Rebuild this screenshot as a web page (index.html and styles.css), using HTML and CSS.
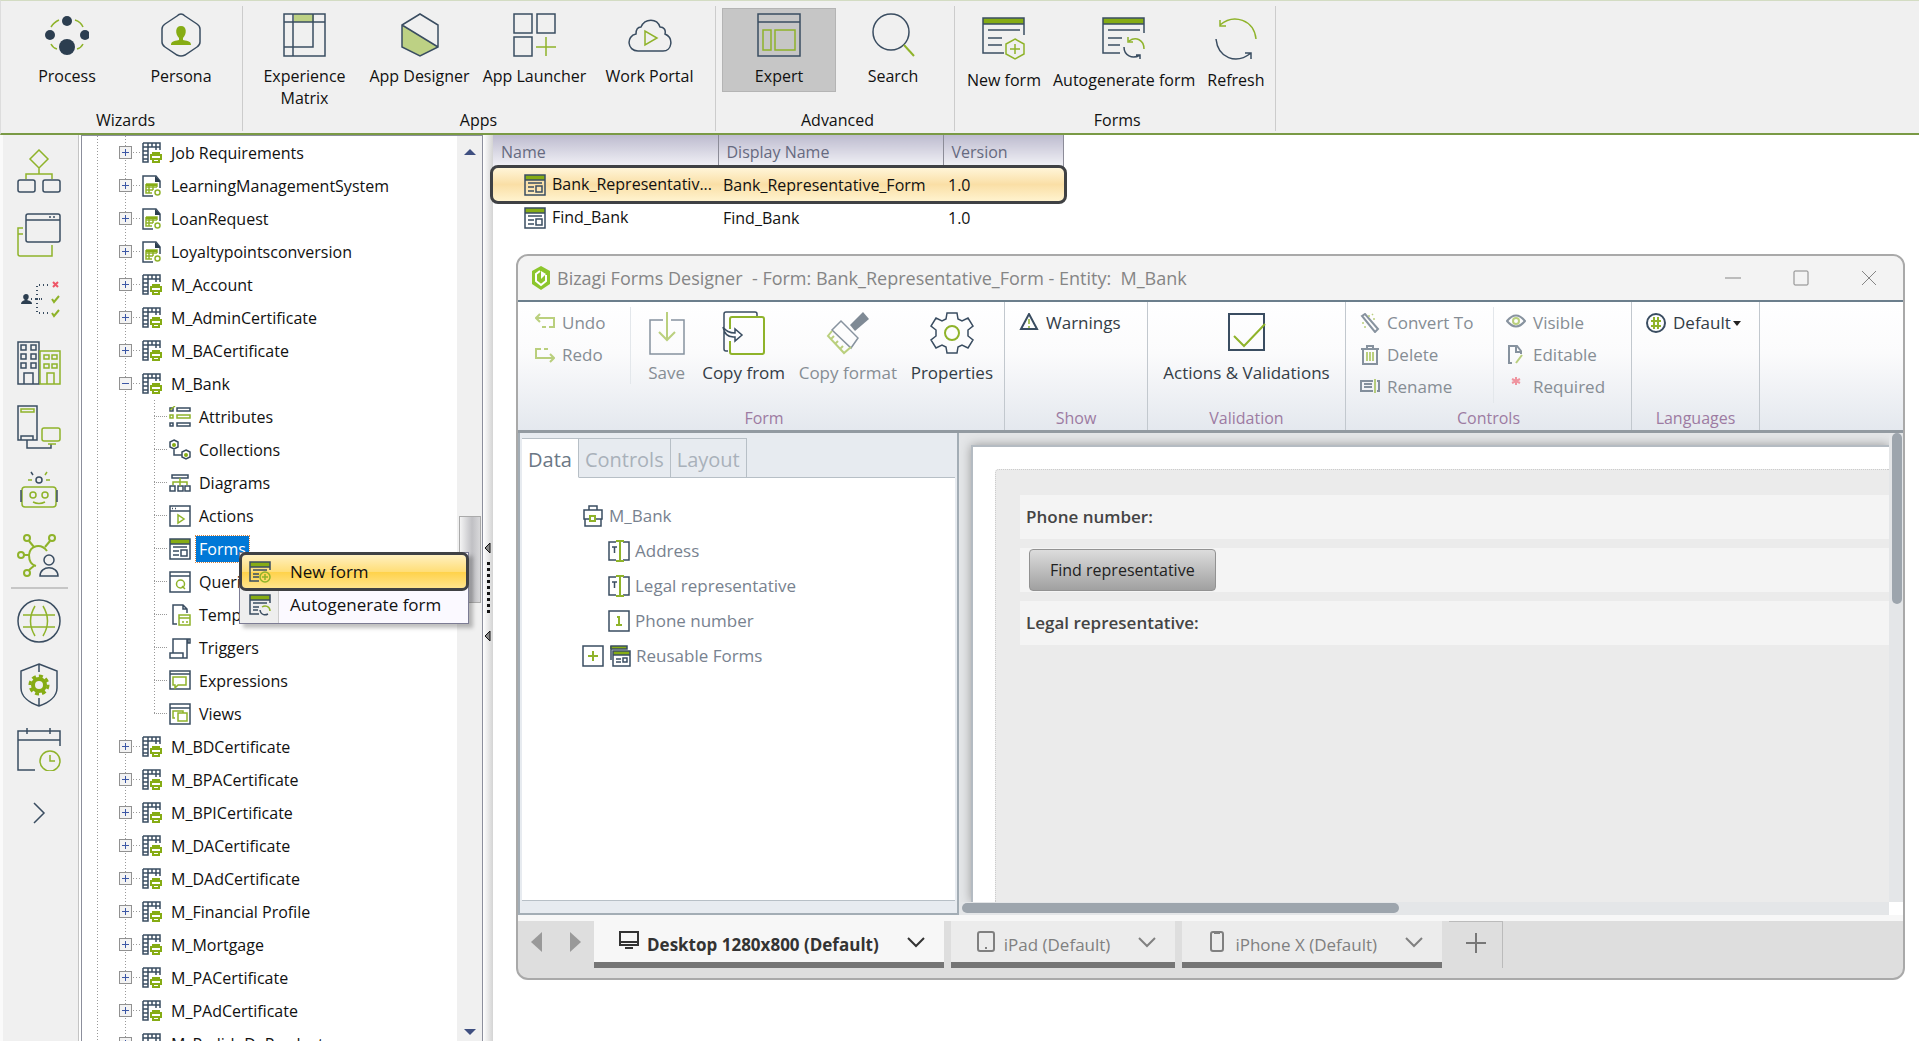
FILE: index.html
```html
<!DOCTYPE html>
<html lang="en">
  <head>
    <meta charset="utf-8">
    <title>Bizagi Studio</title>
    <link rel="stylesheet" href="styles.css">
  </head>
  <body>
    <!-- Icon sprite -->
    <svg class="sprite" aria-hidden="true">
      <symbol id="i-entity" viewBox="0 0 20 22">
        <path class="n" d="M1 1h17v7M1 1v19h5V1M1 5h17M1 9h5M1 13h5M1 17h5M10 1v4M14 1v7"/>
        <path class="g2 solid" d="M9 13h10v4H9zM11 13v-2h6v2M11 17v3h6v-3"/>
      </symbol>
      <symbol id="i-appentity" viewBox="0 0 20 22">
        <path class="n" d="M11 21H1V1h13l4 5v7"/>
        <path class="nf" d="M13 1l5 5v1h-5z"/>
        <path class="g" d="M4 9h11v3M4 9v9h6M4 12h11M4 15h7M7 9v9M11 9v6"/>
        <path class="gf" d="M4 9h11v2H4z"/>
        <circle class="g" cx="15.500" cy="17.500" r="2.500"/>
      </symbol>
      <symbol id="i-attributes" viewBox="0 0 22 22">
        <path class="n" d="M8 2h13v3H8zM8 17h13v3H8zM1 17h3v3H1zM1 2h3v3H1z"/>
        <path class="g" d="M8 9h13v3H8zM1 9h3v3H1zM1 4l5-4"/>
      </symbol>
      <symbol id="i-collections" viewBox="0 0 22 22">
        <path class="n" d="M5 1l4 2v5l-4 2-4-2V3zM17 11l4 2v5l-4 2-4-2v-5zM5 10v6h8"/>
        <circle class="gf" cx="5" cy="6" r="2"/><circle class="gf" cx="17" cy="16" r="2"/>
      </symbol>
      <symbol id="i-diagrams" viewBox="0 0 22 22">
        <path class="n" d="M3 3h16v3H3zM1 14h5v5H1zM9 14h5v5H9zM16 14h5v5h-5z"/>
        <path class="g" d="M11 6v8M4 13v-3h14v3"/>
      </symbol>
      <symbol id="i-actions" viewBox="0 0 22 22">
        <path class="n" d="M1 1h20v20H1zM1 6h20M3 3.500h1M6 3.500h1"/>
        <path class="g" d="M9 10v8l6-4z"/>
      </symbol>
      <symbol id="i-forms" viewBox="0 0 22 22">
        <path class="gf" d="M1 1h20v5H1z"/>
        <path class="n" d="M1 1h20v20H1zM1 6h20M4 9h14M4 13h6M4 17h6M12 12h6v6h-6z"/>
      </symbol>
      <symbol id="i-queries" viewBox="0 0 22 22">
        <path class="n" d="M1 1h20v20H1zM1 5h20"/>
        <path class="g" d="M13 15l3 3"/><circle class="g" cx="11.500" cy="13" r="4"/>
      </symbol>
      <symbol id="i-templates" viewBox="0 0 22 22">
        <path class="n" d="M8 20H4V1h10l4 4v4M14 1v4h4"/>
        <path class="g" d="M10 11h11v10H10zM10 14h11M13 18h2M17 18h2"/>
      </symbol>
      <symbol id="i-triggers" viewBox="0 0 22 22">
        <path class="n" d="M4 16V2h15v4h2V2h-3v18M1 16h13v5H1zM14 21h4V3"/>
      </symbol>
      <symbol id="i-expressions" viewBox="0 0 22 22">
        <path class="n" d="M1 1h20v18H1zM1 4h20"/>
        <path class="g" d="M4 7h13v8H9l-3 3v-3H4z"/>
      </symbol>
      <symbol id="i-views" viewBox="0 0 22 22">
        <path class="n" d="M1 1h20v20H1zM1 5h20"/>
        <path class="g" d="M9 10h9v8H9zM6 15H4V8h10v2"/>
      </symbol>
      <symbol id="i-newform" viewBox="0 0 44 44">
        <path class="gf" d="M1 1h41v6H1z"/>
        <path class="n" d="M22 36H1V1h41v17M1 7h41M6 13h32M6 21h14M6 28h14"/>
        <path class="g" d="M33 22l9 5v10l-9 5-9-5V27zM33 27v10M28 32h10"/>
      </symbol>
      <symbol id="i-autoform" viewBox="0 0 44 44">
        <path class="gf" d="M1 1h41v6H1z"/>
        <path class="n" d="M18 36H1V1h41v15M1 7h41M6 13h32M6 21h14M6 28h12M22 30c0 8 8 13 16 8M38 42v-4h-4"/>
        <path class="g" d="M42 32c0-9-8-13-15-8M26 20v5h5"/>
      </symbol>
      <symbol id="i-newform-small" viewBox="0 0 22 22">
        <path class="gf" d="M1 1h20v5H1z"/>
        <path class="n" d="M10 20H1V1h20v8M1 6h20M4 9h14M4 13h6M4 16h6"/>
        <circle class="g" cx="16" cy="16" r="5"/>
        <path class="g" d="M16 13v6M13 16h6"/>
      </symbol>
      <symbol id="i-autoform-small" viewBox="0 0 22 22">
        <path class="gf" d="M1 1h20v5H1z"/>
        <path class="n" d="M10 20H1V1h20v8M1 6h20M4 9h14M4 13h6M4 16h5M11 16c1 6 6 5 8 4"/>
        <path class="g" d="M21 17c0-5-5-6-8-4"/>
      </symbol>
      <symbol id="i-chevron" viewBox="0 0 20 12"><path d="M2 2l8 8 8-8"/></symbol>
      <symbol id="i-text" viewBox="0 0 22 22">
        <path class="n" d="M8 2H1v18h7M15 2h6v18h-6M4 7h5M6.500 7v6"/>
        <path class="g2" d="M8 1h8M12 1v20M8 21h8"/>
      </symbol>
    </svg>

    <header class="ribbon">
      <section class="ribbon-group">
        <div class="ribbon-items">
          <button class="tool">
            <svg class="tool-icon" viewBox="0 0 44 44"><path class="g" d="M6 14q3-5 8-7M30 7q6 2 8 7M6 31q2 4 6 5M38 31q-2 4-6 5"/><g class="nf"><circle cx="22" cy="8" r="5"/><circle cx="5" cy="22" r="5"/><circle cx="40" cy="22" r="5"/><circle cx="22" cy="34" r="8"/></g></svg>
            Process
          </button>
          <button class="tool">
            <svg class="tool-icon" viewBox="0 0 44 44"><path class="n" d="M22 1q2 0 4 2l12 8q3 2 3 5v13q0 3-3 5l-12 8q-4 2-8 0L6 34q-3-2-3-5V16q0-3 3-5l12-8q2-2 4-2z"/><path class="gf" d="M22 13c6 0 6 8 2 12v2c6 1 8 2 8 5H12c0-3 2-4 8-5v-2c-4-4-4-12 2-12z"/></svg>
            Persona
          </button>
        </div>
        <h2>Wizards</h2>
      </section>
      <section class="ribbon-group apps">
        <div class="ribbon-items">
          <button class="tool">
            <svg class="tool-icon" viewBox="0 0 44 44"><path class="gl" d="M11 1h20v8H11z"/><path class="n" d="M1 1h41v42H1zM1 9h41M10 1v42M30 1v33H1"/></svg>
            Experience Matrix
          </button>
          <button class="tool">
            <svg class="tool-icon" viewBox="0 0 44 44"><path class="gl" d="M4 12l36 22-18 9-18-9z"/><path class="n" d="M22 1l18 11v22l-18 9-18-9V12zM4 12l36 22"/></svg>
            App Designer
          </button>
          <button class="tool">
            <svg class="tool-icon" viewBox="0 0 44 44"><path class="n" d="M1 1h18v19H1zM24 1h18v19H24zM1 24h18v19H1z"/><path class="g" d="M33 24v19M23 34h20"/></svg>
            App Launcher
          </button>
          <button class="tool">
            <svg class="tool-icon" viewBox="0 0 44 44"><path class="n" d="M10 38C-1 38-2 23 8 21c0-5 2-7 5-7 4-9 16-9 19 0 4 0 6 3 5 7 9 4 7 17-2 17z"/><path class="g" d="M17 18v14l12-7z"/></svg>
            Work Portal
          </button>
        </div>
        <h2>Apps</h2>
      </section>
      <section class="ribbon-group">
        <div class="ribbon-items">
          <button class="tool active">
            <svg class="tool-icon" viewBox="0 0 44 44"><path class="n" d="M1 1h42v42H1zM1 9h42"/><path class="g" d="M6 17h8v20H6zM18 17h20v20H18z"/></svg>
            Expert
          </button>
          <button class="tool">
            <svg class="tool-icon" viewBox="0 0 44 44"><circle class="n" cx="20" cy="19" r="18"/><path class="g2" d="M33 32l10 11"/></svg>
            Search
          </button>
        </div>
        <h2>Advanced</h2>
      </section>
      <section class="ribbon-group forms">
        <div class="ribbon-items">
          <button class="tool"><svg class="tool-icon"><use href="#i-newform"/></svg>New form</button>
          <button class="tool"><svg class="tool-icon"><use href="#i-autoform"/></svg>Autogenerate form</button>
          <button class="tool">
            <svg class="tool-icon" viewBox="0 0 44 44"><path class="g" d="M42 22C40 3 20-4 6 8M6 3v6h6"/><path class="n" d="M2 22c2 19 20 26 35 14M37 42v-6h-6"/></svg>
            Refresh
          </button>
        </div>
        <h2>Forms</h2>
      </section>
    </header>

    <div class="workspace">
      <nav class="rail">
        <button aria-label="Processes"><svg viewBox="0 0 44 44"><path class="g" d="M22 1l9 9-9 9-9-9zM22 19v6M9 30v-5h26v5"/><rect class="n" x="1" y="31" width="17" height="12" rx="2"/><rect class="n" x="26" y="31" width="17" height="12" rx="2"/></svg></button>
        <button aria-label="Windows"><svg viewBox="0 0 44 44"><rect class="n" x="9" y="1" width="34" height="28" rx="2"/><path class="n" d="M9 7h34M32 4h2M36 4h2"/><path class="g" d="M6 15H1v26q0 2 2 2h32V32M1 21h5"/></svg></button>
        <button aria-label="Rules"><svg viewBox="0 0 44 44"><path class="n dots" d="M14 22h12M20 22V8h12M20 22h6M20 22v14h12"/><path class="nf" d="M9 17c4 0 3 5 1 6 4 1 5 2 5 4H4c0-2 1-3 4-4-3-2-2-6 1-6z"/><path class="r" d="M36 5l5 5M41 5l-5 5"/><path class="g2" d="M35 22l2 3 5-6M35 36l2 3 5-6"/></svg></button>
        <button aria-label="Organization"><svg viewBox="0 0 44 44"><path class="n" d="M1 1h21v42H1zM4 4h5v5H4zM14 4h5v5h-5zM4 13h5v5H4zM14 13h5v5h-5zM4 22h5v5H4zM14 22h5v5h-5zM7 43V32h9v11"/><path class="g" d="M23 10h20v33H23zM27 14h5v4h-5zM35 14h5v4h-5zM27 23h5v4h-5zM35 23h5v4h-5zM30 43V32h7v11"/></svg></button>
        <button aria-label="Systems"><svg viewBox="0 0 44 44"><path class="n" d="M1 1h19v34H1zM4 35v-4h12v4M10 35v8h24v-4"/><path class="g" d="M4 4h13v3H4zM31 39h8"/><rect class="g" x="25" y="23" width="18" height="13" rx="2"/></svg></button>
        <button aria-label="Bots"><svg viewBox="0 0 44 44"><rect class="g" x="5" y="18" width="34" height="20" rx="3"/><circle class="g" cx="16" cy="26" r="3"/><circle class="g" cx="28" cy="26" r="3"/><path class="g" d="M16 33q6 3 12 0M11 11h4M28 6l2-3M29 11h4"/><path class="n" d="M4 21v12M40 21v12M16 6l-2-3"/><circle class="n" cx="22" cy="11" r="3"/></svg></button>
        <button aria-label="Experience"><svg viewBox="0 0 44 44"><g class="g2"><circle cx="10" cy="5" r="3"/><circle cx="35" cy="5" r="3"/><circle cx="4" cy="22" r="3"/><circle cx="10" cy="40" r="3"/><path d="M12 8l5 6M33 8l-5 6M7 22h5M12 37l6-5M30 18C24 10 13 12 12 22c0 6 3 10 7 11"/></g><circle class="n" cx="32" cy="27" r="5"/><path class="n" d="M23 43c0-11 18-11 18 0z"/></svg></button>
        <hr>
        <button aria-label="Localization"><svg viewBox="0 0 44 44"><circle class="n" cx="22" cy="22" r="21"/><path class="g" d="M6 16h32M6 28h32M18 7q-9 15 0 30M26 7q9 15 0 30"/></svg></button>
        <button aria-label="Security"><svg viewBox="0 0 44 44"><path class="n" d="M22 1l18 7v17c0 9-9 15-18 18C13 40 4 34 4 25V8zM22 1v8M22 35v8"/><circle class="gear" cx="22" cy="22" r="6"/><circle class="teeth" cx="22" cy="22" r="9"/></svg></button>
        <button aria-label="Schedule"><svg viewBox="0 0 44 44"><path class="n" d="M18 43H1V4h42v15M1 13h42M10 1v6M33 1v6"/><circle class="g" cx="33" cy="34" r="10"/><path class="g" d="M33 28v6h5"/></svg></button>
        <button aria-label="Expand"><svg viewBox="0 0 44 44"><path class="n" d="M17 12l10 10-10 10"/></svg></button>
      </nav>

      <aside class="explorer">
        <ul class="tree">
          <li><span class="node"><i class="box"></i><svg><use href="#i-entity"/></svg>Job Requirements</span></li>
          <li><span class="node"><i class="box"></i><svg><use href="#i-appentity"/></svg>LearningManagementSystem</span></li>
          <li><span class="node"><i class="box"></i><svg><use href="#i-appentity"/></svg>LoanRequest</span></li>
          <li><span class="node"><i class="box"></i><svg><use href="#i-appentity"/></svg>Loyaltypointsconversion</span></li>
          <li><span class="node"><i class="box"></i><svg><use href="#i-entity"/></svg>M_Account</span></li>
          <li><span class="node"><i class="box"></i><svg><use href="#i-entity"/></svg>M_AdminCertificate</span></li>
          <li><span class="node"><i class="box"></i><svg><use href="#i-entity"/></svg>M_BACertificate</span></li>
          <li>
            <span class="node"><i class="box open"></i><svg><use href="#i-entity"/></svg>M_Bank</span>
            <ul class="branch">
              <li><svg><use href="#i-attributes"/></svg>Attributes</li>
              <li><svg><use href="#i-collections"/></svg>Collections</li>
              <li><svg><use href="#i-diagrams"/></svg>Diagrams</li>
              <li><svg><use href="#i-actions"/></svg>Actions</li>
              <li class="has-menu">
                <svg><use href="#i-forms"/></svg><span class="selected">Forms</span>
                <div class="context-menu">
                  <button class="hot"><svg><use href="#i-newform-small"/></svg>New form</button>
                  <button><svg><use href="#i-autoform-small"/></svg>Autogenerate form</button>
                </div>
              </li>
              <li><svg><use href="#i-queries"/></svg>Queries</li>
              <li><svg><use href="#i-templates"/></svg>Templates</li>
              <li><svg><use href="#i-triggers"/></svg>Triggers</li>
              <li><svg><use href="#i-expressions"/></svg>Expressions</li>
              <li><svg><use href="#i-views"/></svg>Views</li>
            </ul>
          </li>
          <li><span class="node"><i class="box"></i><svg><use href="#i-entity"/></svg>M_BDCertificate</span></li>
          <li><span class="node"><i class="box"></i><svg><use href="#i-entity"/></svg>M_BPACertificate</span></li>
          <li><span class="node"><i class="box"></i><svg><use href="#i-entity"/></svg>M_BPICertificate</span></li>
          <li><span class="node"><i class="box"></i><svg><use href="#i-entity"/></svg>M_DACertificate</span></li>
          <li><span class="node"><i class="box"></i><svg><use href="#i-entity"/></svg>M_DAdCertificate</span></li>
          <li><span class="node"><i class="box"></i><svg><use href="#i-entity"/></svg>M_Financial Profile</span></li>
          <li><span class="node"><i class="box"></i><svg><use href="#i-entity"/></svg>M_Mortgage</span></li>
          <li><span class="node"><i class="box"></i><svg><use href="#i-entity"/></svg>M_PACertificate</span></li>
          <li><span class="node"><i class="box"></i><svg><use href="#i-entity"/></svg>M_PAdCertificate</span></li>
          <li><span class="node"><i class="box"></i><svg><use href="#i-entity"/></svg>M_PedidoDeProducto</span></li>
        </ul>
        <div class="scrollbar">
          <svg viewBox="0 0 12 8"><path d="M0 7l6-6 6 6z"/></svg>
          <div class="track"><div class="thumb"></div></div>
          <svg viewBox="0 0 12 8"><path d="M0 1l6 6 6-6z"/></svg>
        </div>
      </aside>
      <div class="splitter">
        <svg viewBox="0 0 8 12"><path d="M6 1v10L1 6z"/></svg>
        <span></span>
        <svg viewBox="0 0 8 12"><path d="M6 1v10L1 6z"/></svg>
      </div>

      <main class="content">
        <table class="list">
          <thead>
            <tr><th>Name</th><th>Display Name</th><th>Version</th></tr>
          </thead>
          <tbody>
            <tr class="current"><td><svg><use href="#i-forms"/></svg>Bank_Representativ...</td><td>Bank_Representative_Form</td><td>1.0</td></tr>
            <tr><td><svg><use href="#i-forms"/></svg>Find_Bank</td><td>Find_Bank</td><td>1.0</td></tr>
          </tbody>
        </table>

        <section class="window">
          <div class="titlebar">
            <svg class="logo" viewBox="0 0 20 24"><path d="M10 0l9 5v13l-9 6-9-6V5z" fill="#8cc62c"/><path d="M9 5L5 8v7l5 4 5-4V9" fill="none" stroke="#fff" stroke-width="2"/><path d="M10 5l5 3-5 5z" fill="#fff"/></svg>
            <h1>Bizagi Forms Designer &nbsp;- Form: Bank_Representative_Form - Entity: &nbsp;M_Bank</h1>
            <button aria-label="Minimize"><svg viewBox="0 0 16 16"><path d="M0 8h16"/></svg></button>
            <button aria-label="Maximize"><svg viewBox="0 0 16 16"><rect x="1" y="1" width="14" height="14" rx="1"/></svg></button>
            <button aria-label="Close"><svg viewBox="0 0 16 16"><path d="M1 1l14 14M15 1L1 15"/></svg></button>
          </div>

          <div class="designer-ribbon">
            <section class="form-group">
              <div class="row">
                <div class="stack undo">
                  <button class="small off"><svg viewBox="0 0 20 20"><path class="g2" d="M5 1L1 5l4 4M1 5h18v9h-5M11 14H7"/></svg>Undo</button>
                  <button class="small off"><svg viewBox="0 0 20 20"><path class="g2" d="M15 9l4 4-4 4M19 13H1V4h5M9 4h4"/></svg>Redo</button>
                </div>
                <button class="large off"><svg viewBox="0 0 44 44"><path class="n" d="M18 9H5v34h34V9H26"/><path class="g2" d="M22 1v28M14 21l8 8 8-8"/></svg>Save</button>
                <button class="large"><svg viewBox="0 0 44 44"><path class="n" d="M6 40H4q-2 0-2-2V3q0-2 2-2h29q2 0 2 2v2M1 16q4 6 12 6v-4l7 6-7 6v-4Q3 27 1 16z"/><path class="g2" d="M8 18V8q0-2 2-2h30q2 0 2 2v33q0 2-2 2H10q-2 0-2-2V30"/></svg>Copy from</button>
                <button class="large off"><svg viewBox="0 0 44 44"><path class="nf" d="M24 14L37 1l6 7-14 12z"/><path class="n" d="M15 10l17 17-7 10L6 19z"/><path class="g2" d="M6 20L2 25l16 17 7-6M5 28l3-3M9 33l3-3M14 38l3-3"/></svg>Copy format</button>
                <button class="large"><svg viewBox="0 0 44 44"><path class="n" d="M17 2h10l1 6 4 2 6-3 5 8-5 4v6l5 4-5 8-6-3-4 2-1 6H17l-1-6-4-2-6 3-5-8 5-4v-6l-5-4 5-8 6 3 4-2z"/><circle class="g2" cx="22" cy="22" r="7"/></svg>Properties</button>
              </div>
              <h3>Form</h3>
            </section>
            <section class="show-group">
              <div class="row">
                <button class="small"><svg viewBox="0 0 20 20"><path class="n2" d="M10 1l8 15H2z"/><path class="g" d="M10 6v5M10 13v2"/></svg>Warnings</button>
              </div>
              <h3>Show</h3>
            </section>
            <section class="validation-group">
              <div class="row">
                <button class="large"><svg viewBox="0 0 44 44"><path class="n2" d="M4 3h35v36H4z"/><path class="g2" d="M9 25l10 10 21-22"/></svg>Actions &amp; Validations</button>
              </div>
              <h3>Validation</h3>
            </section>
            <section class="controls-group">
              <div class="row">
                <div class="stack convert">
                  <button class="small off"><svg viewBox="0 0 20 20"><path class="n2" d="M2 3l3-2 13 15-3 3z"/><path class="g" d="M9 2v2M13 6h2M2 10h2M5 13v2M12 1l1 1"/></svg>Convert To</button>
                  <button class="small off"><svg viewBox="0 0 20 20"><path class="n2" d="M3 5v14h14V5M1 4h18M7 4V1h6v3"/><path class="g2" d="M7 7v9M10 7v9M13 7v9"/></svg>Delete</button>
                  <button class="small off"><svg viewBox="0 0 20 20"><path class="n2" d="M13 4H1v10h12M17 4h2v10h-2M4 7h8M4 10h8"/><path class="g2" d="M15 2v14"/></svg>Rename</button>
                </div>
                <div class="stack">
                  <button class="small off"><svg viewBox="0 0 20 20"><path class="n2" d="M1 8q9-11 18 0-9 11-18 0z"/><circle class="g2" cx="10" cy="8" r="3"/></svg>Visible</button>
                  <button class="small off"><svg viewBox="0 0 20 20"><path class="n2" d="M6 18H3V1h8l4 5v3M10 1v6h5"/><path class="g2" d="M10 18l6-8"/></svg>Editable</button>
                  <button class="small off"><svg viewBox="0 0 20 20"><path class="r" d="M10 0v8M6 2l8 4M14 2L6 6"/></svg>Required</button>
                </div>
              </div>
              <h3>Controls</h3>
            </section>
            <section class="lang-group">
              <div class="row">
                <button class="small"><svg viewBox="0 0 20 20"><circle class="n2" cx="10" cy="10" r="9"/><path class="g2" d="M5 8h10M5 13h10M8 4v12M12 4v12"/></svg>Default<b class="caret"></b></button>
              </div>
              <h3>Languages</h3>
            </section>
          </div>

          <div class="designer">
            <div class="palette">
              <div class="tabs">
                <button class="on">Data</button><button>Controls</button><button>Layout</button>
              </div>
              <ul class="fields">
                <li><svg viewBox="0 0 22 22"><path class="n" d="M2 5h18v9H2zM7 5V1h8v4M3 14v7h16v-7"/><path class="g2 white" d="M8 11h5v5H8z"/></svg>M_Bank</li>
                <li class="child"><svg><use href="#i-text"/></svg>Address</li>
                <li class="child"><svg><use href="#i-text"/></svg>Legal representative</li>
                <li class="child"><svg viewBox="0 0 22 22"><path class="n" d="M1 1h20v20H1z"/><path class="g2" d="M9 7h2v8M8 15h6"/></svg>Phone number</li>
                <li><svg viewBox="0 0 22 22"><path class="n" d="M1 1h20v20H1z"/><path class="g2" d="M11 6v10M6 11h10"/></svg><svg viewBox="0 0 22 22"><path class="gf" d="M1 1h17v3H1zM4 6h17v4H4z"/><path class="n" d="M2 15V1h16v3H2M4 6h17v15H4zM4 10h17M7 14h5M7 17h5M14 13h4v4h-4z"/></svg>Reusable Forms</li>
              </ul>
              <div class="palette-foot"></div>
            </div>
            <div class="canvas">
              <div class="page">
                <div class="form">
                  <div class="field">Phone number:</div>
                  <div class="field"><button class="find">Find representative</button></div>
                  <div class="field">Legal representative:</div>
                </div>
              </div>
              <div class="vbar"><div></div></div>
              <div class="hbar"><div></div></div>
              <div class="corner"></div>
            </div>
          </div>

          <div class="devices">
            <div class="arrows">
              <button aria-label="Previous"><svg viewBox="0 0 12 20"><path d="M11 0v20L0 10z"/></svg></button>
              <button aria-label="Next"><svg viewBox="0 0 12 20"><path d="M1 0v20l11-10z"/></svg></button>
            </div>
            <button class="device on"><svg viewBox="0 0 22 22"><path d="M2 1h18v13H2zM2 11h18M7 17h8"/></svg><span>Desktop 1280x800 (Default)</span><svg class="chev"><use href="#i-chevron"/></svg></button>
            <button class="device"><svg viewBox="0 0 22 22"><rect x="3" y="1" width="16" height="19" rx="2"/><path d="M10 17h2"/></svg><span>iPad (Default)</span><svg class="chev"><use href="#i-chevron"/></svg></button>
            <button class="device"><svg viewBox="0 0 22 22"><rect x="5" y="1" width="12" height="19" rx="2"/><path d="M8 2h6"/></svg><span>iPhone X (Default)</span><svg class="chev"><use href="#i-chevron"/></svg></button>
            <button class="add" aria-label="Add device"><svg viewBox="0 0 20 20"><path d="M10 0v20M0 10h20"/></svg></button>
          </div>
        </section>
      </main>
    </div>
  </body>
</html>
```
FILE: styles.css
```css
* {
  box-sizing: border-box;
}

body {
  margin: 0;
  height: 100vh;
  display: flex;
  flex-direction: column;
  overflow: hidden;
  background: #fff;
  color: #111;
  font-family: "Open Sans", "Segoe UI", sans-serif;
  font-size: 16px;
  line-height: 22px;
}

button {
  font: inherit;
  color: inherit;
  background: none;
  border: none;
  padding: 0;
  white-space: nowrap;
}

ul {
  list-style: none;
  margin: 0;
  padding: 0;
}

h1, h2, h3 {
  margin: 0;
  font-size: 16px;
  font-weight: normal;
}

/* Icon strokes */
svg {
  flex: none;
}

.sprite {
  position: absolute;
  width: 0;
  height: 0;
}

.n, .n2, .g, .g2, .r {
  fill: none;
  stroke: #3a4d61;
  stroke-width: 1.5;
}

.g, .g2 {
  stroke: #8fb32a;
}

.n2, .g2 {
  stroke-width: 2;
}

.solid {
  stroke: #86ac14;
}

.r {
  stroke: #ee5566;
  stroke-width: 2;
}

.nf {
  fill: #2c3e50;
}

.gf {
  fill: #86ac14;
}

.gl {
  fill: #bdd184;
}

.white {
  fill: #fff;
}

.dots {
  stroke-dasharray: 1 3;
  stroke-width: 2;
}

.gear {
  fill: none;
  stroke: #86ac14;
  stroke-width: 4;
}

.teeth {
  fill: none;
  stroke: #86ac14;
  stroke-width: 3;
  stroke-dasharray: 4 3;
}

/* Main ribbon */
.ribbon {
  display: flex;
  flex: none;
  height: 135px;
  padding: 5px 3px 2px;
  background: #f0f0f0;
  border-top: 1px solid #d3dcc3;
  border-bottom: 2px solid #7a9a45;
  border-left: 1px solid #ddd;
}

.ribbon-group {
  display: flex;
  flex-direction: column;
  justify-content: space-between;
  padding: 2px 4px 0 6px;
  border-right: 1px solid #ccc;
  text-align: center;
}

.ribbon-group h2 {
  padding-left: 3px;
}

.ribbon-items {
  display: flex;
}

.tool {
  display: flex;
  flex-direction: column;
  align-items: center;
  width: 114px;
  height: 84px;
  padding-top: 4px;
  gap: 8px;
  white-space: normal;
  border: 1px solid transparent;
}

.ribbon-group.apps {
  padding-left: 4px;
  padding-right: 8px;
}

.apps .tool {
  width: 115px;
}

.apps .tool:first-child {
  padding-left: 15px;
  padding-right: 15px;
}

.tool.active {
  background: #c6c6c6;
  border-color: #b4b4b4;
}

.tool-icon {
  width: 44px;
  height: 44px;
}

.forms .ribbon-items {
  padding-top: 4px;
}

.forms .tool {
  width: auto;
  padding-left: 5px;
  padding-right: 5px;
}

/* Left rail */
.workspace {
  display: flex;
  flex: 1;
  min-height: 0;
}

.rail {
  display: flex;
  flex-direction: column;
  align-items: center;
  gap: 20px;
  width: 79px;
  padding: 14px 3px 0 0;
  background: #f0f0f0;
  border-left: 3px solid #fafafa;
  border-right: 1px solid #c4c4c4;
}

.rail button,
.rail svg {
  display: block;
  width: 44px;
  height: 44px;
}

.rail hr {
  width: 57px;
  height: 2px;
  margin: -10px 0;
  border: none;
  background: #c6c6c6;
}

/* Entity tree */
.explorer {
  display: flex;
  width: 402px;
  margin-left: 2px;
  border: 1px solid #8c8f9c;
  border-bottom: none;
}

.tree {
  flex: 1;
  height: 100%;
  padding-left: 37px;
  background: repeating-linear-gradient(#999 0 1px, #fff 1px 3px) 15px 0 / 1px 100% no-repeat,
    repeating-linear-gradient(#999 0 1px, #fff 1px 3px) 43px 0 / 1px 100% no-repeat;
}

.node {
  display: flex;
  align-items: center;
  height: 33px;
  background: repeating-linear-gradient(90deg, #999 0 1px, transparent 1px 3px) 14px 16px / 8px 1px no-repeat;
}

.node svg {
  width: 20px;
  height: 22px;
  margin-right: 9px;
}

.box {
  width: 13px;
  height: 13px;
  margin-right: 10px;
  border: 1px solid #919191;
  background: linear-gradient(#3c57a5, #3c57a5) 2px 5px / 7px 1px no-repeat,
    linear-gradient(#3c57a5, #3c57a5) 5px 2px / 1px 7px no-repeat,
    #f3f3f3;
}

.box.open {
  background: linear-gradient(#3c57a5, #3c57a5) 2px 5px / 7px 1px no-repeat,
    #f3f3f3;
}

.branch {
  padding-left: 35px;
  background: repeating-linear-gradient(#999 0 1px, #fff 1px 3px) 35px 0 / 1px 314px no-repeat;
}

.branch > li {
  display: flex;
  align-items: center;
  height: 33px;
}

.branch > li::before {
  content: "";
  width: 13px;
  margin-right: 2px;
  border-top: 1px dotted #999;
}

.branch > li > svg {
  width: 22px;
  height: 22px;
  margin-right: 8px;
}

.branch .selected {
  margin: 0 -3px;
  padding: 2px 3px;
  background: #0078d7;
  color: #fff;
  outline: 1px dotted #d08040;
}

.has-menu {
  position: relative;
}

.context-menu {
  position: absolute;
  z-index: 2;
  left: 85px;
  top: 20px;
  width: 230px;
  padding: 2px;
  border: 1px solid #7c7c94;
  background: linear-gradient(90deg, #eee 38px, #ccc 38px, #ccc 39px, #fbf9ff 39px);
  box-shadow: 4px 4px 4px rgba(0, 0, 0, 0.25);
}

.context-menu button {
  display: flex;
  align-items: center;
  gap: 19px;
  width: 100%;
  height: 33px;
  padding-left: 7px;
  font-size: 17px;
}

.context-menu svg {
  width: 22px;
  height: 22px;
}

.context-menu .hot {
  background: linear-gradient(#fff0c0, #ffde78 50%, #ffd24a 52%, #ffe48c);
  outline: 3px solid #3f4144;
  border-radius: 4px;
}

.scrollbar {
  display: flex;
  flex-direction: column;
  align-items: center;
  width: 25px;
  padding: 12px 0 5px;
  background: #f0f0f0;
}

.scrollbar svg {
  width: 12px;
  height: 8px;
  fill: #3f4f80;
}

.track {
  flex: 1;
  width: 22px;
  padding-top: 360px;
}

.thumb {
  height: 87px;
  border: 1px solid #aaa;
  background: linear-gradient(90deg, #f4f4f4, #c0c0c4 60%, #d8d8da);
}

.splitter {
  display: flex;
  flex-direction: column;
  align-items: center;
  gap: 8px;
  width: 10px;
  padding-top: 407px;
  background: linear-gradient(90deg, #fff, #d4d4d4);
}

.splitter svg {
  width: 8px;
  height: 12px;
  fill: #888;
  stroke: #111;
}

.splitter span {
  width: 3px;
  height: 53px;
  margin-bottom: 7px;
  background: repeating-linear-gradient(#111 0 3px, transparent 3px 6px);
}

/* Form list */
.content {
  position: relative;
  flex: 1;
  min-width: 0;
}

.list {
  border-collapse: collapse;
  table-layout: fixed;
  width: 571px;
}

.list th {
  height: 33px;
  padding: 0 8px;
  text-align: left;
  font-weight: normal;
  color: #666a80;
  background: linear-gradient(#bdbbcf, #f4f4f8);
  border-right: 1px solid #8c8c98;
}

.list th:nth-child(1) {
  width: 225px;
}

.list th:nth-child(2) {
  width: 225px;
}

.list td {
  height: 33px;
  padding: 0 5px;
  white-space: nowrap;
}

.list td:first-child {
  padding-left: 31px;
}

.list svg {
  width: 22px;
  height: 22px;
  margin-right: 6px;
  vertical-align: middle;
}

.list .current {
  background: linear-gradient(#fff5d8, #fadfa6 50%, #fff3cf);
  outline: 3px solid #3f4144;
  border-radius: 5px;
}

/* Forms designer window */
.window {
  position: absolute;
  top: 119px;
  left: 23px;
  right: 14px;
  bottom: 61px;
  display: flex;
  flex-direction: column;
  overflow: hidden;
  border: 2px solid #a9a9a9;
  border-radius: 12px;
  background: #dedede;
}

.titlebar {
  display: flex;
  flex: none;
  align-items: center;
  gap: 52px;
  height: 44px;
  padding: 0 26px 0 13px;
  background: #f3f3f3;
  color: #858585;
}

.titlebar h1 {
  flex: 1;
  margin-left: -46px;
  font-size: 18px;
}

.titlebar .logo {
  width: 20px;
  height: 24px;
}

.titlebar button,
.titlebar button svg {
  display: block;
  width: 16px;
  height: 16px;
  fill: none;
  stroke: #858585;
}

.designer-ribbon {
  display: flex;
  flex: none;
  height: 133px;
  border-top: 2px solid #6c7f8c;
  border-bottom: 3px solid #929aa1;
  background: linear-gradient(#fff, #fbfbfc 40%, #e4e8ee);
  color: #333c46;
  font-size: 17px;
}

.designer-ribbon section {
  display: flex;
  flex-direction: column;
  justify-content: space-between;
  padding: 5px 14px 1px;
  border-right: 1px solid #c2c8ce;
}

.designer-ribbon h3 {
  text-align: center;
  color: #9d7ba2;
}

.designer-ribbon .row {
  display: flex;
}

.small {
  display: flex;
  align-items: center;
  gap: 7px;
  height: 32px;
}

.small svg {
  width: 20px;
  height: 20px;
}

.large {
  display: flex;
  flex-direction: column;
  align-items: center;
  gap: 7px;
  margin-top: 4px;
}

.large svg {
  width: 44px;
  height: 44px;
}

.off {
  color: #868d94;
}

.off svg {
  opacity: 0.6;
}

.designer-ribbon .form-group {
  width: 487px;
  padding-left: 17px;
  padding-right: 11px;
}

.form-group .row {
  justify-content: space-between;
}

.undo {
  width: 96px;
  border-right: 1px solid #e3e7eb;
}

.designer-ribbon .show-group {
  width: 143px;
}

.designer-ribbon .validation-group {
  width: 198px;
}

.validation-group .row {
  justify-content: center;
}

.designer-ribbon .controls-group {
  width: 286px;
}

.convert {
  width: 134px;
  margin-right: 12px;
  border-right: 1px solid #e3e7eb;
}

.designer-ribbon .lang-group {
  width: 128px;
}

.caret {
  margin-left: -5px;
  border: 4px solid transparent;
  border-top: 5px solid #222;
  border-bottom: none;
}

.designer {
  display: flex;
  flex: 1;
  min-height: 0;
}

.palette {
  display: flex;
  flex-direction: column;
  width: 441px;
  padding: 0 2px;
  border: 2px solid #a3adb5;
  border-top: none;
  background: #e7ebf0;
}

.tabs {
  display: flex;
  height: 45px;
  padding-top: 5px;
  border-bottom: 1px solid #b7bfc6;
}

.tabs button {
  height: 40px;
  padding: 3px 6px 0;
  border: 1px solid #b7bfc6;
  border-left: none;
  color: #a9b1ba;
  font-size: 20px;
}

.tabs .on {
  background: #fff;
  border-bottom-color: #fff;
  color: #6b7785;
}

.fields {
  flex: 1;
  padding: 20px 0 0 60px;
  background: #fff;
  border-bottom: 1px solid #b7bfc6;
  color: #78828f;
  font-size: 17px;
}

.fields li {
  display: flex;
  align-items: center;
  gap: 5px;
  height: 35px;
}

.fields .child {
  padding-left: 26px;
}

.fields svg {
  width: 22px;
  height: 22px;
}

.palette-foot {
  height: 12px;
}

.canvas {
  display: grid;
  flex: 1;
  grid-template-columns: 1fr 14px;
  grid-template-rows: 1fr 13px;
  min-width: 0;
  background: #e4e6e8;
}

.page {
  margin: 12px 0 0 12px;
  padding: 22px 0 0 22px;
  border: 2px solid #b4bbc2;
  border-right: none;
  border-bottom: none;
  background: #fff;
  box-shadow: 0 0 10px #999;
  clip-path: inset(-12px 0 0 -12px);
}

.form {
  height: 100%;
  padding: 25px 0 0 24px;
  border: 1px dotted #ccc;
  border-right: none;
  border-bottom: none;
  border-radius: 4px 0 0 0;
  background: #ebebeb;
}

.field {
  display: flex;
  align-items: center;
  height: 44px;
  margin-bottom: 9px;
  padding-left: 6px;
  background: #f4f4f4;
  color: #444;
  font-size: 17px;
  font-weight: 600;
}

.find {
  height: 42px;
  margin-left: 3px;
  padding: 0 20px;
  border: 1px solid #929292;
  border-radius: 4px;
  background: linear-gradient(#dcdcdc, #a0a0a0);
  color: #222;
  font-size: 16px;
  font-weight: normal;
}

.vbar div {
  width: 10px;
  height: 171px;
  margin-left: 3px;
  border-radius: 5px;
  background: #9da5ad;
}

.hbar div {
  width: 47%;
  height: 10px;
  margin: 1px 0 0 3px;
  border-radius: 5px;
  background: #9da5ad;
}

.corner {
  background: #fff;
}

/* Device tabs */
.devices {
  display: flex;
  flex: none;
  gap: 7px;
  height: 63px;
  padding-bottom: 10px;
  border-top: 6px solid #f7f7f7;
  color: #808080;
  font-size: 17px;
}

.arrows {
  display: flex;
  gap: 26px;
  width: 69px;
  padding-left: 13px;
}

.arrows svg {
  width: 12px;
  height: 20px;
  fill: #999;
}

.device {
  display: flex;
  align-items: center;
  gap: 7px;
  padding: 0 18px 0 24px;
  background: #ececec;
  border-bottom: 6px solid #757575;
}

.device span {
  padding-top: 6px;
}

.device svg {
  width: 22px;
  height: 22px;
  fill: none;
  stroke: currentColor;
  stroke-width: 2;
}

.device .chev {
  width: 20px;
  height: 12px;
  margin-left: 20px;
}

.device.on {
  background: #f7f7f7;
  color: #333;
  font-weight: 700;
}

.add {
  width: 54px;
  border-top: 1px solid #bbb;
  border-right: 1px solid #bbb;
}

.add svg {
  width: 20px;
  height: 20px;
  stroke: #777;
  stroke-width: 2;
}
```
